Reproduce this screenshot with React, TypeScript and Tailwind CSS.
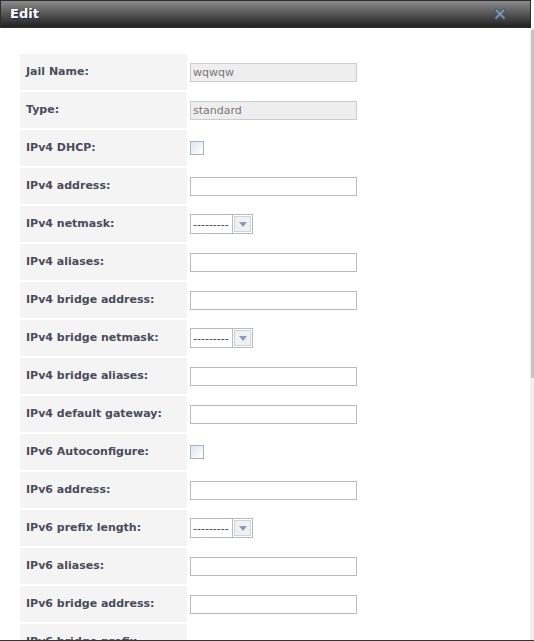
import React from "react";

type Kind = "ro" | "text" | "check" | "select" | "none";
const rows: { label: string; kind: Kind; value?: string }[] = [
  { label: "Jail Name:", kind: "ro", value: "wqwqw" },
  { label: "Type:", kind: "ro", value: "standard" },
  { label: "IPv4 DHCP:", kind: "check" },
  { label: "IPv4 address:", kind: "text" },
  { label: "IPv4 netmask:", kind: "select" },
  { label: "IPv4 aliases:", kind: "text" },
  { label: "IPv4 bridge address:", kind: "text" },
  { label: "IPv4 bridge netmask:", kind: "select" },
  { label: "IPv4 bridge aliases:", kind: "text" },
  { label: "IPv4 default gateway:", kind: "text" },
  { label: "IPv6 Autoconfigure:", kind: "check" },
  { label: "IPv6 address:", kind: "text" },
  { label: "IPv6 prefix length:", kind: "select" },
  { label: "IPv6 aliases:", kind: "text" },
  { label: "IPv6 bridge address:", kind: "text" },
  { label: "IPv6 bridge prefix length:", kind: "select" },
];

function Field({ kind, value }: { kind: Kind; value?: string }) {
  if (kind === "ro")
    return (
      <div className="w-[167px] h-[19px] border border-[#cccccc] bg-[#eeeeee] text-[#777777] text-[11px] leading-[17px] px-[2px] font-['DejaVu_Sans',sans-serif]">
        {value}
      </div>
    );
  if (kind === "text")
    return <div className="w-[167px] h-[19px] border border-[#b5bac8] bg-white" />;
  if (kind === "check")
    return (
      <div className="w-[14px] h-[14px] border border-[#a9b0c0] bg-gradient-to-br from-[#dfe7f2] to-[#ffffff]" />
    );
  if (kind === "select")
    return (
      <div className="flex w-[63px] h-[20px] border border-[#b5bac8] bg-white">
        <div className="flex-1 flex items-center pl-[2px] overflow-hidden">
          <span className="text-[11px] text-[#444] leading-none font-['DejaVu_Sans',sans-serif]">---------</span>
        </div>
        <div className="w-[20px] h-full border-l border-[#b5bac8] p-[1px]">
          <div className="w-full h-full border border-[#d0d3da] bg-[#f1f1f1] flex items-center justify-center">
            <svg width="8" height="5" viewBox="0 0 8 5">
              <path d="M0 0 H8 L4 5 Z" fill="#8a9bbd" />
            </svg>
          </div>
        </div>
      </div>
    );
  return null;
}

export default function App() {
  return (
    <div className="w-[534px] h-[641px] overflow-hidden flex flex-col bg-white border-b border-[#333333] relative">
      <div className="h-[28px] shrink-0 flex items-center justify-between w-[531px] border border-[#2e2e2e] bg-gradient-to-b from-[#8c8c8c] via-[#555555] to-[#222222] pl-[9px] pr-[24px]">
        <span className="text-white font-bold text-[13px] font-['DejaVu_Sans',sans-serif] [text-shadow:1px_1px_0_#1a2a80,-1px_0_0_#6a4a00]">
          Edit
        </span>
        <svg width="12" height="12" viewBox="0 0 12 12">
          <path d="M2 2 L10 10 M10 2 L2 10" stroke="#4a5f78" strokeWidth="3.4" strokeLinecap="round" />
          <path d="M2 2 L10 10 M10 2 L2 10" stroke="#8aa2bc" strokeWidth="1.4" />
        </svg>
      </div>
      <div className="flex-1 flex min-h-0">
        <div className="flex-1 pt-[26px] pl-[20px] flex flex-col gap-[2px]">
          {rows.map((r) => (
            <div key={r.label} className="flex min-h-[36px] shrink-0">
              <div className="w-[167px] bg-[#f4f4f4] py-[9px] pl-[6px] pr-[4px]">
                <div className="text-[11px] leading-[18px] font-bold text-[#4b4b5b] font-['DejaVu_Sans',sans-serif]">
                  {r.label}
                </div>
              </div>
              <div className="pl-[3px] flex items-center">
                <Field kind={r.kind} value={r.value} />
              </div>
            </div>
          ))}
        </div>
        <div className="w-[4px] bg-[#f0f0f0] pt-[2px] pl-[1px]">
          <div className="w-[3px] h-[348px] bg-[#c4c4c4]" />
        </div>
      </div>
    </div>
  );
}
